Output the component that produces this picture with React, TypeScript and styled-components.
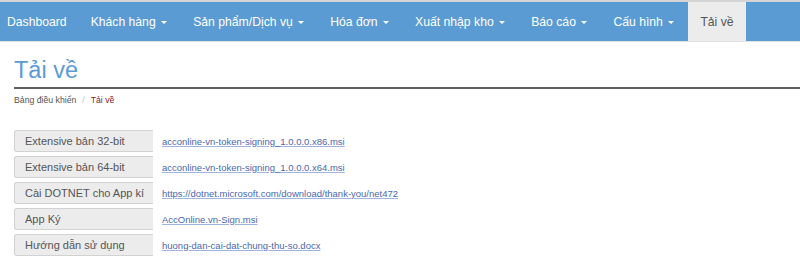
import React from 'react';
import styled, { createGlobalStyle } from 'styled-components';

const GlobalStyle = createGlobalStyle`
  body {
    margin: 0;
    background: #ffffff;
    font-family: "Liberation Sans", Arial, sans-serif;
  }
`;

const NavBar = styled.nav`
  display: flex;
  align-items: stretch;
  height: 39px;
  background: #5a9bd3;
  border-top: 2px solid #d4d4d4;
  border-bottom: 1px solid #e2e2e2;
`;

const NavItem = styled.div<{ $active?: boolean; $first?: boolean }>`
  display: flex;
  align-items: center;
  padding: 0 12px 0 ${({ $first }) => ($first ? '7px' : '12px')};
  font-size: 12.2px;
  color: ${({ $active }) => ($active ? '#555555' : '#ffffff')};
  background: ${({ $active }) => ($active ? '#ececec' : 'transparent')};
  white-space: nowrap;
`;

const Caret = styled.span`
  display: inline-block;
  width: 0;
  height: 0;
  margin: 1px 2.5px 0 5px;
  border-top: 3.5px solid #ffffff;
  border-left: 3.5px solid transparent;
  border-right: 3.5px solid transparent;
`;

const Page = styled.main`
  padding: 15px 0 0 14px;
`;

const Title = styled.h1`
  margin: 0;
  padding-bottom: 3px;
  font-size: 23.5px;
  line-height: 27px;
  font-weight: 400;
  color: #5b9bd5;
  border-bottom: 2px solid #606060;
`;

const Breadcrumb = styled.div`
  display: flex;
  gap: 6px;
  margin-top: 5px;
  font-size: 8.7px;
  line-height: 12px;
  color: #555555;
`;

const Sep = styled.span`
  color: #c4c4c4;
`;

const Current = styled.span`
  color: #8a1c2c;
`;

const List = styled.div`
  display: flex;
  flex-direction: column;
  gap: 4px;
  margin-top: 24px;
`;

const Row = styled.div`
  display: flex;
  align-items: center;
  gap: 9px;
`;

const Label = styled.div`
  box-sizing: border-box;
  width: 139px;
  height: 22px;
  display: flex;
  align-items: center;
  padding-left: 10px;
  font-size: 11px;
  color: #555555;
  background: #ececec;
  border: 1px solid #d2d2d2;
  border-right: none;
  border-radius: 3px 0 0 3px;
`;

const FileLink = styled.a`
  font-size: 9.5px;
  color: #4a68ad;
  text-decoration: underline;
  text-decoration-color: #9fb4de;
`;

const navItems = [
  { label: 'Dashboard' },
  { label: 'Khách hàng', menu: true },
  { label: 'Sản phẩm/Dịch vụ', menu: true },
  { label: 'Hóa đơn', menu: true },
  { label: 'Xuất nhập kho', menu: true },
  { label: 'Báo cáo', menu: true },
  { label: 'Cấu hình', menu: true },
  { label: 'Tải về', active: true },
];

const downloads = [
  { label: 'Extensive bản 32-bit', file: 'acconline-vn-token-signing_1.0.0.0.x86.msi' },
  { label: 'Extensive bản 64-bit', file: 'acconline-vn-token-signing_1.0.0.0.x64.msi' },
  { label: 'Cài DOTNET cho App kí', file: 'https://dotnet.microsoft.com/download/thank-you/net472' },
  { label: 'App Ký', file: 'AccOnline.vn-Sign.msi' },
  { label: 'Hướng dẫn sử dụng', file: 'huong-dan-cai-dat-chung-thu-so.docx' },
];

const App: React.FC = () => {
  return (
    <>
      <GlobalStyle />
      <NavBar>
        {navItems.map((item, i) => (
          <NavItem key={item.label} $active={item.active} $first={i === 0}>
            {item.label}
            {item.menu && <Caret />}
          </NavItem>
        ))}
      </NavBar>
      <Page>
        <Title>Tải về</Title>
        <Breadcrumb>
          <span>Bảng điều khiển</span>
          <Sep>/</Sep>
          <Current>Tải về</Current>
        </Breadcrumb>
        <List>
          {downloads.map((d) => (
            <Row key={d.label}>
              <Label>{d.label}</Label>
              <FileLink href="#">{d.file}</FileLink>
            </Row>
          ))}
        </List>
      </Page>
    </>
  );
};

export default App;
